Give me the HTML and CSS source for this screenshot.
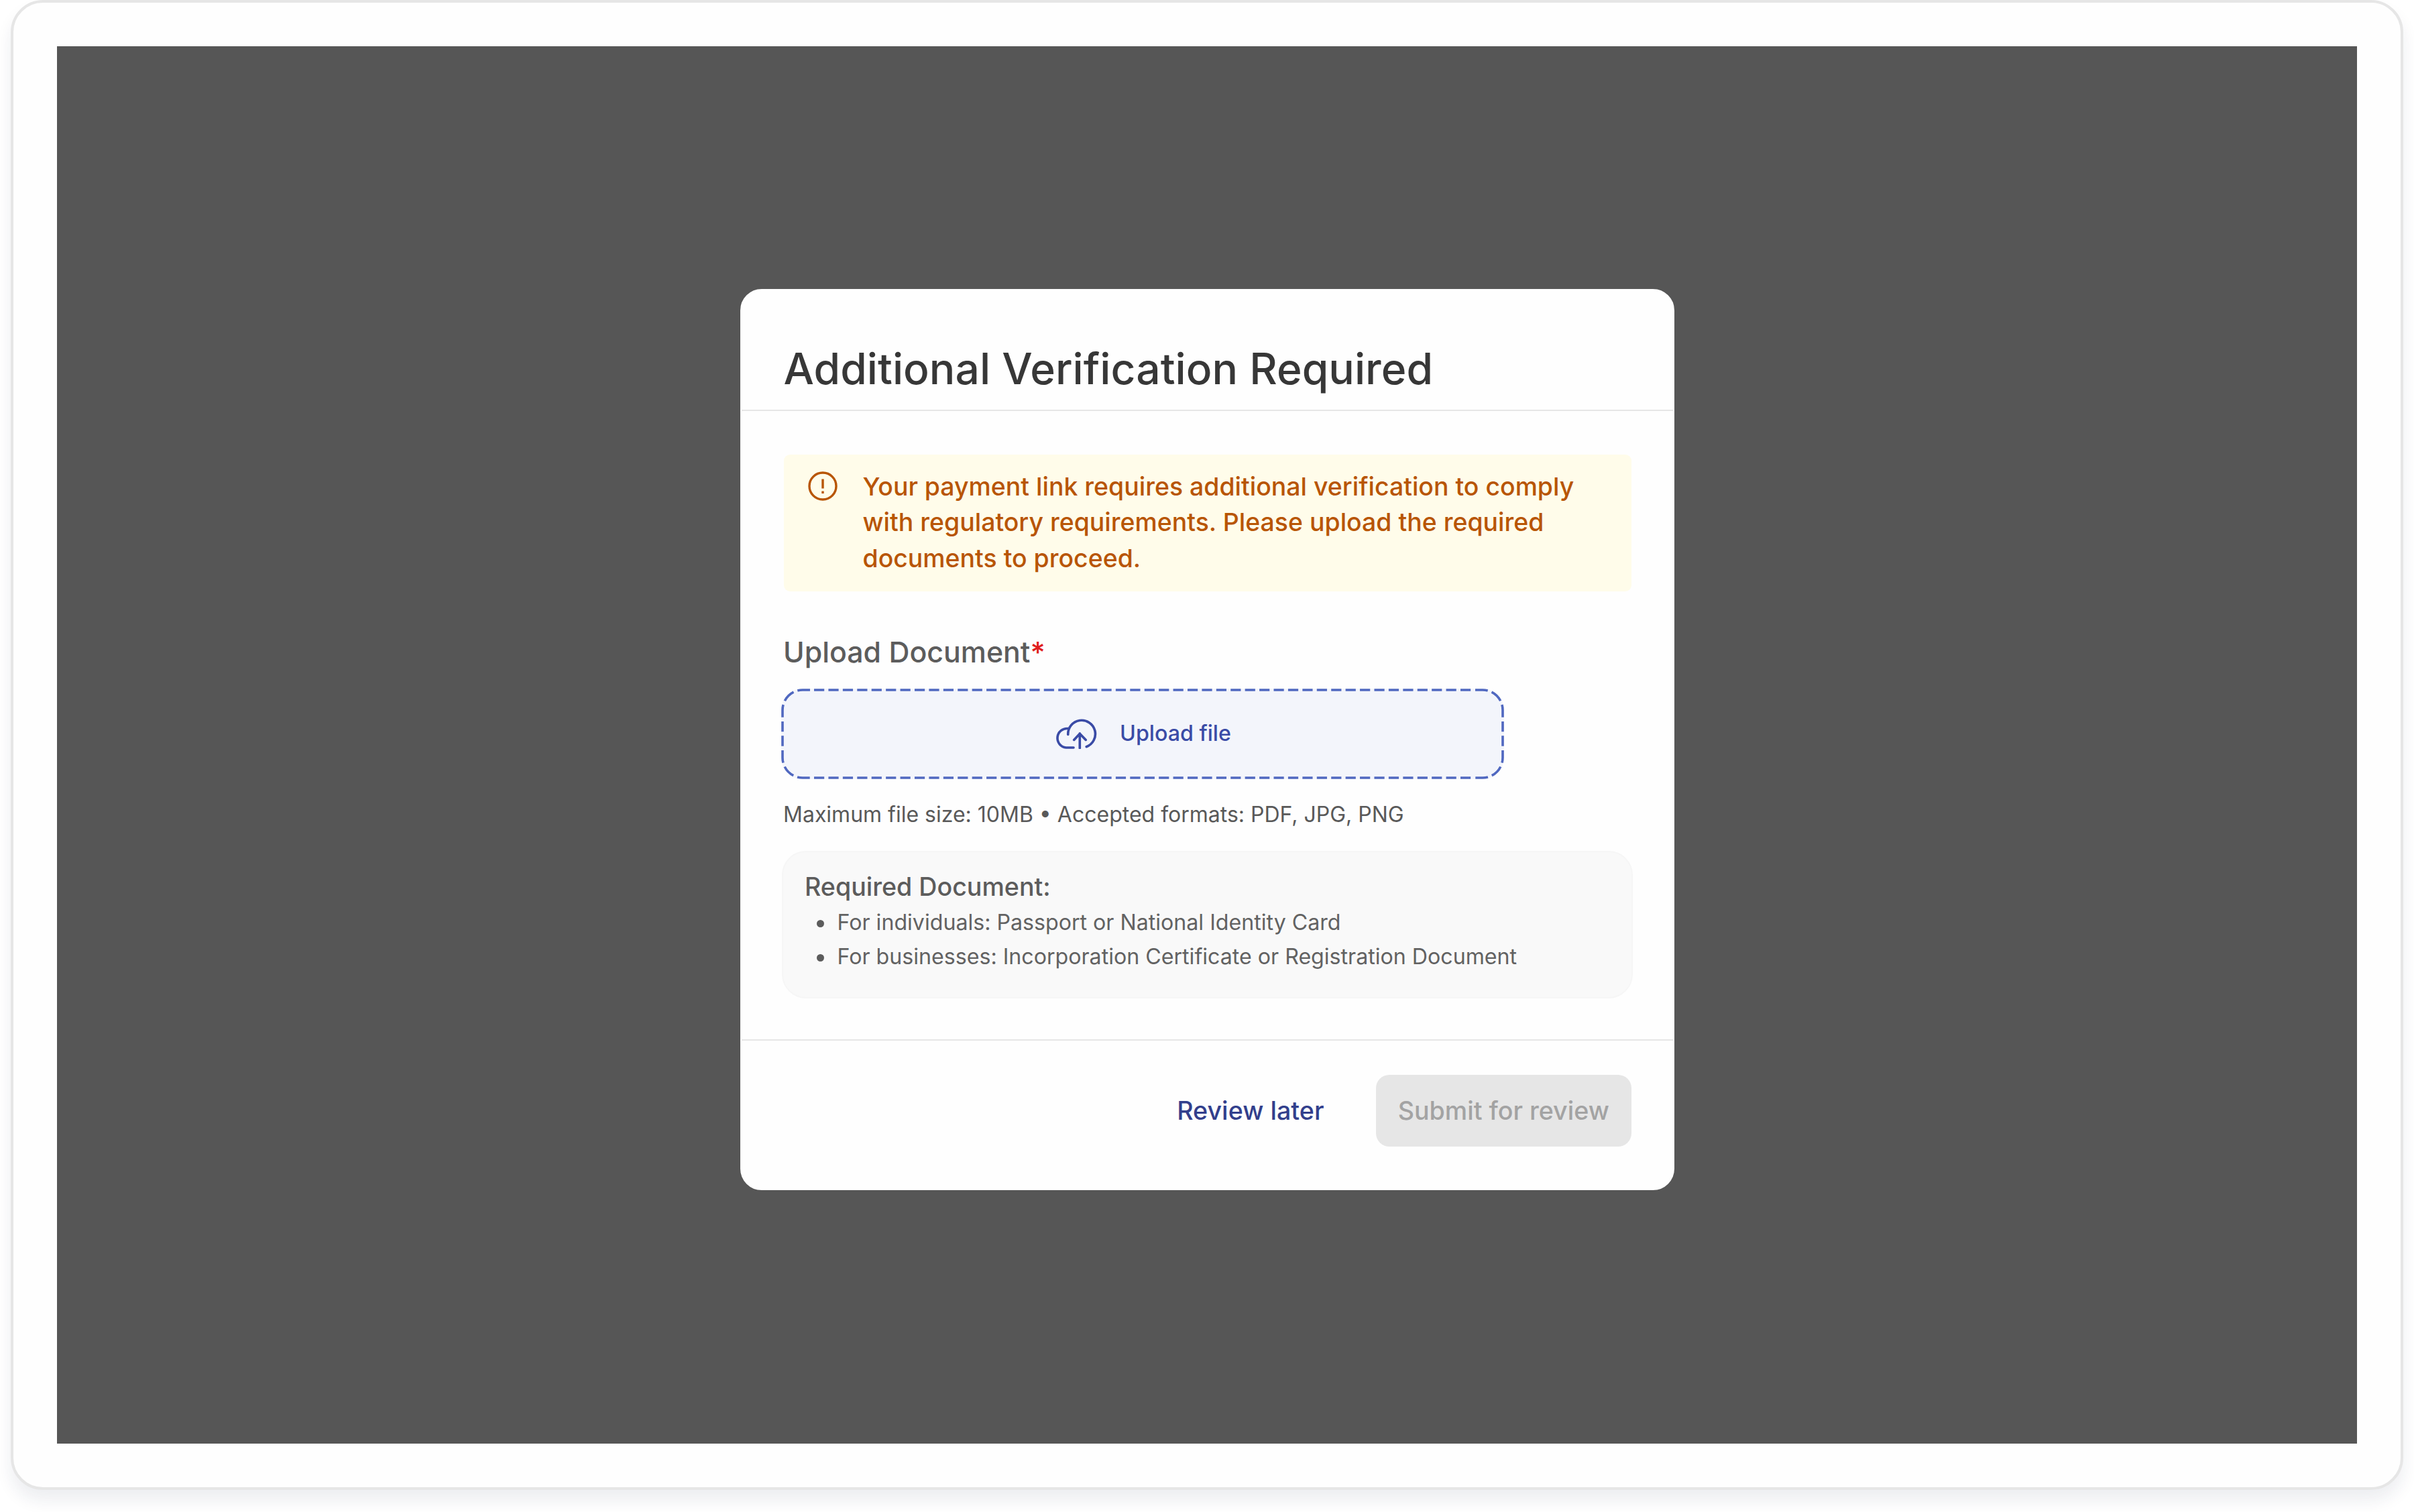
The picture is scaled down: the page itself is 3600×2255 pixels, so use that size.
FILE: index.html
```
<!DOCTYPE html>
<html lang="en">
<head>
    <meta charset="UTF-8">
    <title>Additional Verification Required</title>
    <link rel="stylesheet" href="styles.css">
</head>
<body>
    <div class="frame">
        <div class="overlay">
            <div class="modal">
                <div class="modal-header">
                    <h1 class="title">Additional Verification Required</h1>
                </div>
                <div class="modal-body">
                    <div class="alert">
                        <svg class="alert-icon" viewBox="0 0 44 44" fill="none" stroke="currentColor" stroke-width="3.4">
                            <circle cx="22" cy="22" r="20"/>
                            <path d="M22 11.500V25.500M22 29.500V33"/>
                        </svg>
                        <p class="alert-text">Your payment link requires additional verification to comply<br>with regulatory requirements. Please upload the required<br>documents to proceed.</p>
                    </div>
                    <div class="label">Upload Document<span class="star">*</span></div>
                    <div class="upload">
                        <!-- dashed outline -->
                        <svg class="upload-border" viewBox="0 0 1078 135" fill="none" stroke="currentColor" stroke-width="3.6">
                            <path d="M49 2H1029M49 133H1029" stroke-dasharray="15.2 6.222"/>
                            <path class="side" d="M43 2H32A30 30 0 0 0 2 32V103A30 30 0 0 0 32 133H43"/>
                            <path class="side" d="M1035 2H1046A30 30 0 0 1 1076 32V103A30 30 0 0 1 1046 133H1035"/>
                        </svg>
                        <svg class="upload-icon" viewBox="96 96 192 136" fill="none" stroke="currentColor" stroke-width="11" stroke-linecap="round" stroke-linejoin="round">
                            <path d="M158 167A61.500 61.500 0 1 1 241 222"/>
                            <path d="M158 140A43 43 0 1 0 149 226H183"/>
                            <path d="M211 228V162M185 191L211 163L238 191"/>
                        </svg>
                        <span class="upload-text">Upload file</span>
                    </div>
                    <p class="hint">Maximum file size: 10MB • Accepted formats: PDF, JPG, PNG</p>
                    <div class="docs">
                        <div class="docs-title">Required Document:</div>
                        <ul class="docs-list">
                            <li>For individuals: Passport or National Identity Card</li>
                            <li>For businesses: Incorporation Certificate or Registration Document</li>
                        </ul>
                    </div>
                </div>
                <div class="modal-footer">
                    <button class="btn btn-link">Review later</button>
                    <button class="btn btn-submit" disabled>Submit for review</button>
                </div>
            </div>
        </div>
    </div>
</body>
</html>
```
FILE: styles.css
```
*{
    box-sizing: border-box;
    margin: 0;
    padding: 0;
}
body{
    height: 2255px;
    overflow: hidden;
    background: #fff;
    font-family: Inter, "Liberation Sans", sans-serif;
}
.frame{
    height: 2222px;
    margin: 0 16px;
    padding: 65px 65px 64px 65px;
    border: 4px solid #e6e6e6;
    border-radius: 48px;
    background: #fefefe;
    box-shadow: 0 16px 24px rgba(22, 37, 77, 0.08);
}
.overlay{
    height: 2084px;
    padding-top: 361.5px;
    background: #565656;
}
.modal{
    display: flex;
    flex-direction: column;
    width: 1393px;
    height: 1344.5px;
    margin: 0 auto;
    border: 2px solid #fefefe;
    border-radius: 32px;
    background: #fefefe;
}
.modal-header{
    height: 180px;
    padding: 79px 64px 0 63px;
    border-bottom: 2.5px solid #e6e6e6;
}
.title{
    font-size: 64.1px;
    font-weight: 500;
    line-height: 76px;
    letter-spacing: 0.05px;
    color: #373737;
}
.modal-body{
    flex: 1;
    padding: 65px 62px 0 62px;
}

/* warning */
.alert{
    display: flex;
    height: 204px;
    width: 1264px;
    margin-left: 1px;
    padding: 21.3px 36px 0;
    border-radius: 9px;
    background: #fffcea;
    color: #b85504;
}
.alert-icon{
    width: 44px;
    height: 44px;
    margin: 4.5px 38px 0 0;
}
.alert-text{
    font-size: 37.4px;
    font-weight: 500;
    line-height: 53.6px;
    letter-spacing: 0.02px;
    white-space: nowrap;
}

/* upload */
.label{
    margin: 64.5px 0 0 0.5px;
    font-size: 42.85px;
    font-weight: 500;
    line-height: 52px;
    color: #5c5c5c;
}
.star{
    color: #e01e1e;
}
.upload{
    position: relative;
    display: flex;
    align-items: center;
    justify-content: center;
    gap: 34px;
    width: 1078px;
    height: 135px;
    margin: 29px 0 0 -2.5px;
    border-radius: 32px;
    background: #f3f5fb;
    color: #3a4ba6;
}
.upload-border{
    position: absolute;
    inset: 0;
    width: 1078px;
    height: 135px;
    color: #5068c0;
}
.side{
    stroke-dasharray: 18.8 6.2 18.8 6.2 18.8 6.2 15.4 6 15.4 6.2 18.8 6.2 18.8 6.2 18.8 6.2;
}
.upload-icon{
    width: 64px;
    height: 45px;
}
.upload-text{
    padding-bottom: 1px;
    font-size: 32.2px;
    font-weight: 500;
    line-height: 40px;
}
.hint{
    margin: 32.5px 0 0 0.5px;
    font-size: 32px;
    line-height: 40px;
    color: #595959;
}

/* required documents */
.docs{
    width: 1269.5px;
    height: 220px;
    margin: 34.5px 0 0 -2px;
    padding: 28px 33px 0 32.5px;
    border: 2px solid #f6f6f6;
    border-radius: 36px;
    background: #f9f9f9;
    color: #5c5c5c;
}
.docs-title{
    font-size: 37.6px;
    font-weight: 500;
    line-height: 48px;
}
.docs-list{
    margin-top: 2.5px;
    list-style: none;
}
.docs-list li{
    display: flex;
    align-items: center;
    font-size: 32.15px;
    line-height: 51px;
    color: #626262;
}
.docs-list li::before{
    content: "";
    width: 11px;
    height: 11px;
    margin: 5px 19.5px 0 18px;
    border-radius: 50%;
    background: #5c5c5c;
}

/* footer */
.modal-footer{
    display: flex;
    justify-content: flex-end;
    align-items: flex-start;
    gap: 45.5px;
    height: 223px;
    padding: 51px 62px 0;
    border-top: 2.5px solid #e6e6e6;
}
.btn{
    height: 107px;
    padding: 0 32px;
    border: none;
    border-radius: 20px;
    font-family: inherit;
    font-size: 37.6px;
    font-weight: 500;
    white-space: nowrap;
}
.btn-link{
    background: none;
    color: #323f8c;
    letter-spacing: 0.05px;
}
.btn-submit{
    width: 380.5px;
    background: #e6e6e6;
    color: #a3a3a3;
}
```
